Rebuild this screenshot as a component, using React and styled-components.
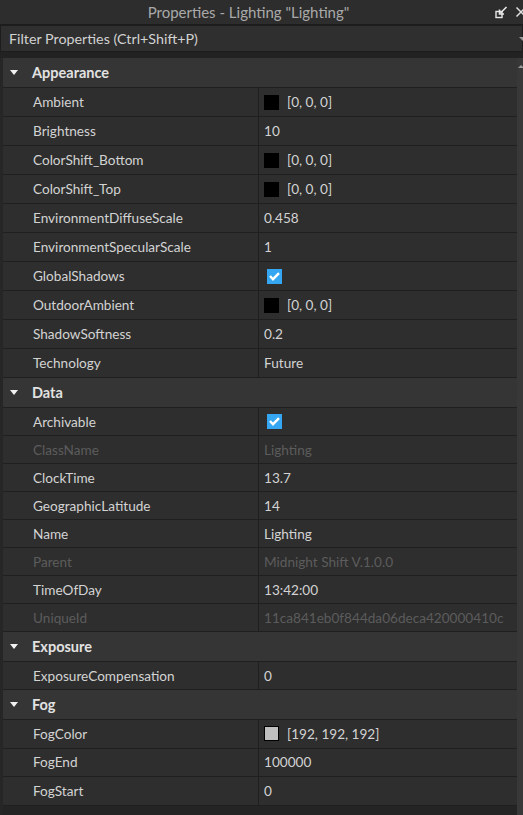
import React from "react";
import styled, { createGlobalStyle } from "styled-components";

const Global = createGlobalStyle`
  html, body {
    margin: 0;
    padding: 0;
    background: #242424;
    overflow: hidden;
  }
  * { box-sizing: border-box; }
`;

const Panel = styled.div`
  width: 523px;
  height: 815px;
  display: flex;
  flex-direction: column;
  background: #242424;
  font-family: Lato, "Open Sans", sans-serif;
  font-size: 13.6px;
  overflow: hidden;
`;

const TitleBar = styled.div`
  height: 25px;
  display: grid;
  grid-template-columns: 1fr auto;
  align-items: center;
  background: #2d2d2d;
  border-bottom: 1px solid #1c1c1c;
`;

const TitleText = styled.div`
  text-align: center;
  color: #a9a9a9;
  font-size: 15px;
  padding-left: 2px;
`;

const TitleIcons = styled.div`
  display: flex;
  align-items: center;
  gap: 7px;
  margin-right: -4px;
`;

const FilterBar = styled.div`
  height: 27px;
  display: flex;
  align-items: center;
  justify-content: space-between;
  padding-left: 8px;
  background: #2f2f2f;
  border: 1px solid #1d1d1d;
  color: #d2d2d2;
  font-size: 14.3px;
`;

const DropArrow = styled.div`
  width: 0;
  height: 0;
  border-left: 4px solid transparent;
  border-right: 4px solid transparent;
  border-top: 4px solid #9a9a9a;
  margin-right: -5px;
`;

const Spacer = styled.div`
  height: 6px;
  background: #222222;
`;

const Body = styled.div`
  flex: 1;
  display: flex;
  min-height: 0;
`;

const List = styled.div`
  flex: 1;
  display: flex;
  flex-direction: column;
  border-left: 3px solid #262626;
`;

const Scrollbar = styled.div`
  width: 6px;
  background: #383838;
  position: relative;
`;

const ScrollUp = styled.div`
  position: absolute;
  top: 7px;
  left: 1px;
  width: 0;
  height: 0;
  border-left: 3px solid transparent;
  border-right: 3px solid transparent;
  border-bottom: 3px solid #9a9a9a;
`;

const Header = styled.div`
  height: 30px;
  flex-shrink: 0;
  display: flex;
  align-items: center;
  background: #353535;
  border-bottom: 1px solid #1f1f1f;
  color: #e2e2e2;
  font-weight: 700;
  font-size: 14.5px;
`;

const Triangle = styled.div`
  width: 0;
  height: 0;
  margin: 0 14px 0 7px;
  border-left: 4.5px solid transparent;
  border-right: 4.5px solid transparent;
  border-top: 5px solid #f2f2f2;
`;

const Row = styled.div`
  height: ${(p) => p.$h}px;
  flex-shrink: 0;
  display: grid;
  grid-template-columns: 256px 1fr;
  background: #2e2e2e;
  border-bottom: 1px solid #1f1f1f;
  color: ${(p) => (p.$disabled ? "#5c5c5c" : "#d3d3d3")};
`;

const NameCell = styled.div`
  display: flex;
  align-items: center;
  padding-left: 30px;
  border-right: 1px solid #1f1f1f;
  white-space: nowrap;
`;

const ValueCell = styled.div`
  display: flex;
  align-items: center;
  padding-left: 5px;
  white-space: nowrap;
  overflow: hidden;
`;

const Swatch = styled.span`
  width: 15px;
  height: 15px;
  margin-right: 8px;
  background: ${(p) => p.$color};
  border: 1px solid #000;
`;

const Check = styled.span`
  width: 15px;
  height: 15px;
  margin-left: 3px;
  background: #35a6f2;
  display: flex;
  align-items: center;
  justify-content: center;
`;

const sections = [
  {
    title: "Appearance",
    h: 29,
    rows: [
      { name: "Ambient", value: "[0, 0, 0]", color: "#000" },
      { name: "Brightness", value: "10" },
      { name: "ColorShift_Bottom", value: "[0, 0, 0]", color: "#000" },
      { name: "ColorShift_Top", value: "[0, 0, 0]", color: "#000" },
      { name: "EnvironmentDiffuseScale", value: "0.458" },
      { name: "EnvironmentSpecularScale", value: "1" },
      { name: "GlobalShadows", check: true },
      { name: "OutdoorAmbient", value: "[0, 0, 0]", color: "#000" },
      { name: "ShadowSoftness", value: "0.2" },
      { name: "Technology", value: "Future" },
    ],
  },
  {
    title: "Data",
    h: 28,
    rows: [
      { name: "Archivable", check: true },
      { name: "ClassName", value: "Lighting", disabled: true },
      { name: "ClockTime", value: "13.7" },
      { name: "GeographicLatitude", value: "14" },
      { name: "Name", value: "Lighting" },
      { name: "Parent", value: "Midnight Shift V.1.0.0", disabled: true },
      { name: "TimeOfDay", value: "13:42:00" },
      { name: "UniqueId", value: "11ca841eb0f844da06deca420000410c", disabled: true },
    ],
  },
  {
    title: "Exposure",
    h: 28,
    rows: [{ name: "ExposureCompensation", value: "0" }],
  },
  {
    title: "Fog",
    h: 28.5,
    rows: [
      { name: "FogColor", value: "[192, 192, 192]", color: "#c0c0c0" },
      { name: "FogEnd", value: "100000" },
      { name: "FogStart", value: "0" },
    ],
  },
];

function CheckMark() {
  return (
    <svg width="11" height="9" viewBox="0 0 11 9">
      <path d="M1 4 L4 7.2 L10 1.2" fill="none" stroke="#fff" strokeWidth="2.4" />
    </svg>
  );
}

function UndockIcon() {
  return (
    <svg width="13" height="13" viewBox="0 0 13 13">
      <rect x="1" y="5.5" width="6" height="6" fill="none" stroke="#e8e8e8" strokeWidth="1.4" />
      <path d="M11.5 1 L5.5 7" stroke="#e8e8e8" strokeWidth="1.6" />
      <path d="M4.5 3.5 V8 H9" fill="none" stroke="#e8e8e8" strokeWidth="1.6" />
    </svg>
  );
}

function CloseIcon() {
  return (
    <svg width="12" height="12" viewBox="0 0 12 12">
      <path d="M1.5 1.5 L10.5 10.5 M10.5 1.5 L1.5 10.5" stroke="#e0e0e0" strokeWidth="1.5" />
    </svg>
  );
}

function PropRow({ row, h }) {
  return (
    <Row $h={h} $disabled={row.disabled}>
      <NameCell>{row.name}</NameCell>
      <ValueCell>
        {row.check && (
          <Check>
            <CheckMark />
          </Check>
        )}
        {row.color && <Swatch $color={row.color} />}
        {row.value}
      </ValueCell>
    </Row>
  );
}

export default function App() {
  return (
    <Panel>
      <Global />
      <TitleBar>
        <TitleText>Properties - Lighting "Lighting"</TitleText>
        <TitleIcons>
          <UndockIcon />
          <CloseIcon />
        </TitleIcons>
      </TitleBar>
      <FilterBar>
        Filter Properties (Ctrl+Shift+P)
        <DropArrow />
      </FilterBar>
      <Spacer />
      <Body>
        <List>
          {sections.map((s) => (
            <React.Fragment key={s.title}>
              <Header>
                <Triangle />
                {s.title}
              </Header>
              {s.rows.map((r) => (
                <PropRow key={r.name} row={r} h={s.h} />
              ))}
            </React.Fragment>
          ))}
        </List>
        <Scrollbar>
          <ScrollUp />
        </Scrollbar>
      </Body>
    </Panel>
  );
}
